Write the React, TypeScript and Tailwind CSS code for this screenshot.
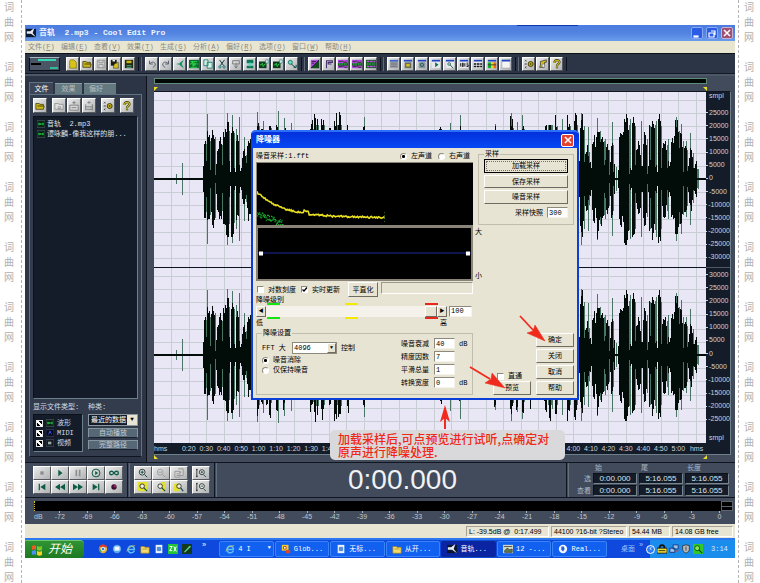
import React from "react";
import { clsx } from "clsx";

const CJK = "font-['Liberation_Sans','Noto_Sans_CJK_SC',sans-serif]";
const MONO = "font-['Liberation_Mono','Noto_Sans_CJK_SC',monospace]";

/* ---------- icons (12 x 12 grid) ---------- */

const icons: Record<string, React.ReactNode> = {
  page: <path d="M3 1h4l3 3v7H2V2z" fill="#d8c21c" stroke="#6b6000" strokeWidth=".7" />,
  folder: (
    <>
      <path d="M1 3h4l1 1h4v2h1l-1 4H1z" fill="#c9b41a" stroke="#2e2a00" strokeWidth=".8" />
      <path d="M3 6h7" stroke="#3b3500" />
    </>
  ),
  folderGrey: <path d="M1 3h4l1 1h5v6H1z M5 7h3v2H5z" fill="#ddd" stroke="#8a8a8a" strokeWidth=".9" />,
  saveGrey: <path d="M1.5 1.5h9v9h-9z M3.5 1.5v3h5v-3 M3.5 10.5v-4h5v4" fill="#d6d6d6" stroke="#8d8d8d" />,
  saveAs: (
    <>
      <path d="M1 1h7v7H1z" fill="#1d1d10" />
      <path d="M3 1h3v2H3z" fill="#eee" />
      <path d="M5 6l5-2v7H4z" fill="#d8c21c" stroke="#222" strokeWidth=".6" />
    </>
  ),
  saveAll: (
    <>
      <path d="M1 1h10v10H1z" fill="#252a10" />
      <path d="M3 2h6v3H3z" fill="#c9b41a" />
      <path d="M3 8h6M3 10h6" stroke="#4b9" />
    </>
  ),
  undo: <path d="M3 2v4h4M3 6c2-3 6-3 7 0 0 2-1 3-3 4" fill="none" stroke="#5c6470" strokeWidth="1.2" />,
  redo: <path d="M9 2v4H5M9 6c-2-3-6-3-7 0 0 2 1 3 3 4" fill="none" stroke="#5c6470" strokeWidth="1.2" />,
  leaf: (
    <>
      <path d="M1 6l5-1 4-3-2 4 2 4-4-3z" fill="#128a62" />
      <path d="M6 5l4-3M6 7l4 3" stroke="#128a62" strokeWidth="1.2" />
    </>
  ),
  wave: (
    <>
      <path d="M0 1h12v10H0z" fill="#0c6a2c" />
      <path d="M1 6h2l1-3 1 6 1-5 1 4 1-3 1 1h2M2 3h8M2 10h8" fill="none" stroke="#2fe84a" strokeWidth=".9" />
    </>
  ),
  copy: <path d="M1 1h5v7H1z M5 4h6v7H5z" fill="#d6efe6" stroke="#1b7c6c" />,
  cut: (
    <>
      <path d="M3 1l5 7M9 1L4 8" stroke="#1a3c3c" strokeWidth="1.2" />
      <circle cx="3.5" cy="9.5" r="1.4" fill="none" stroke="#177" />
      <circle cx="8.5" cy="9.5" r="1.4" fill="none" stroke="#177" />
    </>
  ),
  paste: <path d="M2 2h8v4H2z M6 5v5M4 8l2 3 2-3" fill="none" stroke="#777" strokeWidth="1.1" />,
  mix: (
    <>
      <path d="M2 1h8v4H2zM2 8h8v3H2z" fill="#0c7a58" />
      <path d="M6 4v5M3 6h6" stroke="#3cd6c4" strokeWidth="1.3" />
    </>
  ),
  clip: (
    <>
      <path d="M0 3h9v8H0z" fill="#0b3a1c" />
      <path d="M1 7h2l1-2 1 4 2-3h1" fill="none" stroke="#2fd84a" />
      <path d="M8 1h3v4H8z" fill="#e4f3ec" stroke="#177" strokeWidth=".7" />
    </>
  ),
  convert: (
    <>
      <circle cx="4" cy="4" r="2.4" fill="#6ee0c8" stroke="#0b6a58" />
      <path d="M5 6l5 4M8 10h3V7" fill="none" stroke="#0b4a48" strokeWidth="1.2" />
    </>
  ),
  purpleDiag: (
    <>
      <path d="M1 1h10v10H1z" fill="#b04be0" />
      <path d="M1 11L11 1v10z" fill="#154a20" />
      <path d="M2 3h5M2 5h3M1 11L11 1" stroke="#1c1030" strokeWidth=".9" />
    </>
  ),
  flag: <path d="M3 11V2h7v2H5v2h4" fill="none" stroke="#47306e" strokeWidth="1.3" />,
  purpleGreen: (
    <>
      <path d="M0 1h12v10H0z" fill="#b040e0" />
      <path d="M0 5h12v3H0z" fill="#145c22" />
      <path d="M1 3h3l1-1 2 2h4M1 9h4l1-1 2 2h3" fill="none" stroke="#1c3b12" />
      <path d="M1 6h10" stroke="#35d850" strokeDasharray="2 1" />
    </>
  ),
  greenPurple: (
    <>
      <path d="M0 1h12v10H0z" fill="#155c22" />
      <path d="M1 3h10M1 9h10" stroke="#c04be8" strokeWidth="2" strokeDasharray="3 1" />
      <path d="M1 6h10" stroke="#35d850" strokeDasharray="2 1" />
    </>
  ),
  win: (
    <>
      <path d="M1 1h10v10H1z" fill="#f4f4f4" stroke="#8d9299" strokeWidth=".7" />
      <path d="M1 1h10v2H1z" fill="#1f45c4" />
    </>
  ),
  winGrey: (
    <>
      <path d="M1 2h10v9H1z" fill="#9da1a8" />
      <path d="M1 1h10v2H1z" fill="#3f66d4" />
      <path d="M2 5h8M2 7h8M2 9h8" stroke="#6d727a" />
    </>
  ),
  winFolder: (
    <>
      <path d="M1 1h10v2H1z" fill="#1f45c4" />
      <path d="M2 4h8v7H2z" fill="#68705c" />
      <path d="M4 6h4v3H4z" fill="#d8c21c" />
    </>
  ),
  winSearch: (
    <>
      <path d="M1 1h10v2H1z" fill="#1f45c4" />
      <path d="M2 4h8v7H2z" fill="#89939a" />
      <circle cx="6" cy="7" r="2" fill="none" stroke="#175c50" />
    </>
  ),
  winPlay: (
    <>
      <path d="M1 1h10v10H1z" fill="#e6e8ec" />
      <path d="M1 1h10v2H1z" fill="#1f45c4" />
      <path d="M5 4l4 3-4 3z" fill="#0b6a44" />
    </>
  ),
  winZoom: (
    <>
      <path d="M1 1h10v10H1z" fill="#e6e8ec" />
      <path d="M1 1h10v2H1z" fill="#1f45c4" />
      <circle cx="5" cy="6" r="1.6" fill="none" stroke="#26604c" />
      <path d="M6 7l4 4" stroke="#26604c" strokeWidth="1.2" />
    </>
  ),
  winTime: (
    <>
      <path d="M1 1h10v10H1z" fill="#e6e8ec" />
      <path d="M1 1h10v2H1z" fill="#1f45c4" />
      <path d="M2 5v4M4 5h1v4H4zM7 5v4M9 5h2M9 7h2v2H9" fill="none" stroke="#111" strokeWidth="1.1" />
    </>
  ),
  winGrid: (
    <>
      <path d="M1 1h10v10H1z" fill="#e6e8ec" />
      <path d="M1 1h10v2H1z" fill="#1f45c4" />
      <path d="M1 6h10M1 9h10" stroke="#111" strokeWidth="2" strokeDasharray="3 .8" />
    </>
  ),
  winMeter: (
    <>
      <path d="M1 1h10v2H1z" fill="#1f45c4" />
      <path d="M1 4h4v7H1z" fill="#18a83a" />
      <path d="M5 4h3v7H5z" fill="#e8d820" />
      <path d="M8 4h3v7H8z" fill="#e86a20" />
      <path d="M1 7h10" stroke="#333" />
    </>
  ),
  options: (
    <>
      <path d="M1 1l2 2M3 1L1 3M1 5l2 2M3 5L1 7M1 9l2 2M3 9l-2 2" stroke="#333" strokeWidth=".8" />
      <circle cx="8" cy="6" r="3" fill="#c9b41a" stroke="#2a2800" />
      <circle cx="8" cy="6" r="1" fill="#2a2800" />
    </>
  ),
  script: (
    <>
      <path d="M3 3l7-2v3H8l-1 6H2l1-3z" fill="#d8c21c" stroke="#222" strokeWidth=".8" />
      <path d="M5 6h3v4H5z" fill="#eee" stroke="#333" strokeWidth=".5" />
    </>
  ),
  help: (
    <>
      <path d="M3 4.5c0-4 6-4 6-.5 0 2-3 2-3 4M6 9v2" fill="none" stroke="#3c3808" strokeWidth="2.6" />
      <path d="M3 4.5c0-4 6-4 6-.5 0 2-3 2-3 4M6 9v2" fill="none" stroke="#d0c020" strokeWidth="1.3" />
    </>
  ),
  insert: <path d="M1 5h10v6H1z M6 0v4M4 2h4M3 8h6" fill="#dadada" stroke="#777" strokeWidth="1" />,
  insertWave: <path d="M2 4v7M10 4v7M2 7h8M2 10h8M6 0v3M4 2h4" fill="none" stroke="#777" strokeWidth="1" />,
  stop: <path d="M4 4h4v4H4z" fill="#8d8d8d" />,
  play: <path d="M4 2l5 4-5 4z" fill="#0d5c44" />,
  pause: <path d="M4 2v8M8 2v8" stroke="#8d8d8d" strokeWidth="2" />,
  playCircle: (
    <>
      <circle cx="6" cy="6" r="4.7" fill="none" stroke="#0d5c44" strokeWidth="1.2" />
      <path d="M5 3.5L8.5 6 5 8.5z" fill="#0d5c44" />
    </>
  ),
  loop: (
    <path d="M6 6C4 3 .8 3.5 .8 6S4 9 6 6s5.2-2.5 5.2 0S8 9 6 6z" fill="none" stroke="#0d5c44" strokeWidth="1.6" />
  ),
  toStart: <path d="M2 2h1.500v8H2z M10 2v8L4 6z" fill="#0d5c44" />,
  rew: <path d="M6 2v8L0 6zM12 2v8L6 6z" fill="#0d5c44" />,
  ffwd: <path d="M0 2l6 4-6 4zM6 2l6 4-6 4z" fill="#0d5c44" />,
  toEnd: <path d="M8.500 2H10v8H8.500z M2 2l6 4-6 4z" fill="#0d5c44" />,
  record: (
    <>
      <circle cx="6" cy="6" r="3.2" fill="#3c1030" />
      <circle cx="7" cy="5" r="1.4" fill="#a0206a" />
    </>
  ),
  zoomIn: (
    <>
      <circle cx="5" cy="5" r="3.5" fill="#dfe8e4" stroke="#222" />
      <path d="M5 3v4M3 5h4M8 8l3 3" stroke="#0d4c44" strokeWidth="1.2" />
    </>
  ),
  zoomOut: (
    <>
      <circle cx="5" cy="5" r="3.5" fill="none" stroke="#999" />
      <path d="M3 5h4M8 8l3 3" stroke="#999" strokeWidth="1.2" />
    </>
  ),
  zoomFull: (
    <path d="M1 4h6v7H1zM5 1h6v8H7M3 7h3M3 9h3M8 4v2" fill="#d4d4d4" stroke="#888" strokeWidth=".9" />
  ),
  zoomSel: (
    <>
      <path d="M0 0h11v11H0z" fill="#e4e030" />
      <circle cx="5" cy="5" r="2.7" fill="#f2f2e0" stroke="#222" />
      <path d="M7 7l4 4" stroke="#0d4c44" strokeWidth="1.4" />
    </>
  ),
  zoomLeft: (
    <>
      <path d="M6 0h5v11H6z" fill="#e4e030" />
      <circle cx="5" cy="5" r="2.7" fill="#f2f2e0" stroke="#222" />
      <path d="M7 7l4 4" stroke="#0d4c44" strokeWidth="1.4" />
    </>
  ),
  zoomRight: (
    <>
      <path d="M0 2h6v9H0z" fill="#e4e030" />
      <circle cx="6" cy="5" r="2.7" fill="#f2f2e0" stroke="#222" />
      <path d="M8 7l3 4" stroke="#0d4c44" strokeWidth="1.4" />
    </>
  ),
  vZoomIn: (
    <>
      <path d="M1 1v10M0 2h2M0 10h2" stroke="#222" />
      <circle cx="7" cy="5" r="3" fill="#e8ece8" stroke="#222" />
      <path d="M7 3.5v3M5.500 5h3M9 8l3 3" stroke="#0d4c44" />
    </>
  ),
  vZoomOut: (
    <>
      <path d="M1 1v10M0 2h2M0 10h2" stroke="#222" />
      <circle cx="7" cy="5" r="3" fill="#e8ece8" stroke="#222" />
      <path d="M5.500 5h3M9 8l3 3" stroke="#0d4c44" />
    </>
  ),
  track: (
    <>
      <path d="M0 1h12v10H0z" fill="#0a1c12" stroke="#5d7a6c" strokeWidth=".8" />
      <path d="M2 6h8M3 4v4M5 5v2M9 4v4" stroke="#21d84a" strokeWidth="1.3" />
    </>
  ),
  midi: (
    <>
      <path d="M0 1h12v10H0z" fill="#05081c" stroke="#4d5a7c" strokeWidth=".8" />
      <path d="M4 8l2-5 1 3 2 2" fill="none" stroke="#3a54f0" strokeWidth="1.4" />
    </>
  ),
  video: (
    <>
      <path d="M0 1h12v10H0z" fill="#14181e" stroke="#5d6a7c" strokeWidth=".8" />
      <path d="M3 4h5v4H3z" fill="#9aa" />
    </>
  ),
  app: (
    <>
      <path d="M0 1h12v10H0z" fill="#0b1630" />
      <path d="M10 0L5 4H1v3h5l6 4-4-5z" fill="#e8eef8" />
    </>
  ),
  chrome: (
    <>
      <circle cx="6" cy="6" r="5" fill="#e2b52a" />
      <path d="M1.5 4A5 5 0 0 1 11 4H6z" fill="#d8382a" />
      <path d="M1.5 4l3 6A5 5 0 0 1 1.5 4z" fill="#2a9a44" />
      <circle cx="6" cy="6" r="2.2" fill="#3a7ce8" stroke="#fff" />
    </>
  ),
  globe: (
    <>
      <circle cx="6" cy="6" r="5" fill="#5aa8f4" />
      <path d="M3 3h6v5H3z" fill="#f2f6ff" />
    </>
  ),
  ie: (
    <>
      <path d="M10 8a4 4 0 1 1 0-3v1.500H3" fill="none" stroke="#5cc0fa" strokeWidth="1.8" />
      <path d="M1 9c2-5 6-7 10-7" fill="none" stroke="#f0c83c" strokeWidth=".8" />
    </>
  ),
  docFolder: <path d="M1 3h4l1 1h5v7H1z M3 6h6" fill="#f4dc6c" stroke="#a07c18" strokeWidth=".8" />,
  note: (
    <>
      <path d="M2 1h8v10H2z" fill="#e8f4ff" />
      <path d="M4 4h4v4H4z" fill="#4f90e0" stroke="#1c58b0" strokeWidth=".6" />
    </>
  ),
  green: (
    <>
      <path d="M0 0h12v12H0z" fill="#22c43a" />
      <path d="M2 3h3L2 8h3M7 3l3 6M10 3L7 9" fill="none" stroke="#fff" strokeWidth="1.2" />
    </>
  ),
  darkPen: (
    <>
      <path d="M0 0h12v12H0z" fill="#123a20" />
      <path d="M2 10l7-8 2 1-7 7z" fill="#5fd07c" />
    </>
  ),
  globalScape: (
    <>
      <path d="M1 1h8v7H1z" fill="#f0d028" />
      <path d="M3 3h3v3H3z" fill="#fff" stroke="#b33" />
      <path d="M6 7h5v4H6z" fill="#d84a28" />
    </>
  ),
  photo: (
    <>
      <path d="M0 1h12v10H0z" fill="#cfd8c4" />
      <path d="M1 3h10M2 8l3-3 3 2 3-1v4H2z" fill="#5b7a4c" stroke="#444" />
    </>
  ),
  real: (
    <>
      <circle cx="6" cy="6" r="5" fill="#f2f6ff" />
      <path d="M4 3h3l1 3-2 3-2-2z" fill="#2a5cd8" />
    </>
  ),
  lock: (
    <>
      <path d="M3 5c0-5 6-5 6 0" fill="none" stroke="#111" strokeWidth="2" />
      <path d="M0 5h12v6H0z" fill="#f4e030" stroke="#111" />
      <path d="M2 8h8" stroke="#111" />
    </>
  ),
  net: (
    <>
      <path d="M1 5h6v5H1zM5 1h6v5H5z" fill="#9ac4f4" stroke="#12306c" />
      <path d="M9 9l2-2" stroke="#e33" strokeWidth="1.5" />
    </>
  ),
  shield: <path d="M2 2l4-1 4 1v4c0 3-2 4-4 5-2-1-4-2-4-5z M6 3v5" fill="#b8bcc4" stroke="#333" />,
  scan: (
    <>
      <path d="M0 0h12v12H0z" fill="#2fc828" />
      <circle cx="5" cy="5" r="3" fill="#8ae45c" stroke="#0a4a0a" />
      <path d="M7 7l4 4" stroke="#0a4a0a" strokeWidth="1.5" />
    </>
  ),
};

function Icon({ name, className = "size-[10px]" }: { name: string; className?: string }) {
  return (
    <svg viewBox="0 0 12 12" className={clsx("block shrink-0", className)} aria-hidden="true">
      {icons[name]}
    </svg>
  );
}

const raised =
  "border border-t-white border-l-white border-r-[#55585c] border-b-[#55585c] bg-gradient-to-br from-[#ececec] to-[#b0b2b4]";

function ToolButton({ name, size = "w-[13px] h-[14px]" }: { name: string; size?: string }) {
  return (
    <button type="button" aria-label={name} className={clsx("flex shrink-0 items-center justify-center", raised, size)}>
      <Icon name={name} />
    </button>
  );
}

/* ---------- page margins ---------- */

function Margin({ side }: { side: "left" | "right" }) {
  return (
    <div
      className={clsx(
        "h-full w-[22px] shrink-0 overflow-hidden border-dashed border-[#b4b4b4] text-center text-[10px] leading-[15px] text-[#b0b0b0]",
        CJK,
        side === "left" ? "mr-[3px] border-r pr-[3px]" : "ml-[3px] border-l pr-[1px]",
      )}
    >
      {Array.from({ length: 10 }, (_, i) => (
        <div key={i} className="h-[60px]">
          {["词", "曲", "网"].map((c) => (
            <div key={c}>{c}</div>
          ))}
        </div>
      ))}
    </div>
  );
}

/* ---------- toolbar ---------- */

const toolGroups = [
  ["undo", "redo", "leaf", "wave", "copy", "cut", "paste", "mix", "clip", "clip", "convert"],
  ["purpleDiag", "flag", "purpleGreen", "purpleGreen", "greenPurple"],
  ["winGrey", "winFolder", "winSearch", "winPlay", "winZoom", "winTime", "winGrid", "winMeter", "win"],
  ["options", "script", "help"],
];

function Toolbar() {
  return (
    <div className="flex h-[21px] items-center gap-[2px] border-t border-b border-t-[#0c1018] border-b-[#141a26] bg-[#2b3546] pl-[4px]">
      <div className="flex items-center gap-[1px] border-r border-[#0d121c] pr-[3px]">
        <button
          type="button"
          aria-label="level"
          className="mr-[5px] flex h-[14px] w-[31px] flex-col justify-center gap-[2px] border border-[#0b0f18] border-t-[#aab4c0] bg-[#4a5666] px-[1px]"
        >
          <span className="ml-[7px] h-[2px] w-[18px] bg-[#35d8b0]" />
          <span className="h-[2px] w-[10px] bg-black" />
          <span className="ml-auto h-[2px] w-[8px] bg-[#2cbc98]" />
        </button>
        {["page", "folder", "saveGrey", "saveAs", "saveAll"].map((n) => (
          <ToolButton key={n} name={n} />
        ))}
      </div>
      {toolGroups.map((g, i) => (
        <div key={i} className="flex gap-[1px] border-l border-r border-l-[#5c6878] border-r-[#0d121c] px-[3px]">
          {g.map((n, j) => (
            <ToolButton key={j} name={n} />
          ))}
        </div>
      ))}
    </div>
  );
}

/* ---------- file organizer ---------- */

function Organizer() {
  return (
    <aside className={clsx("flex w-[121px] shrink-0 flex-col bg-[#2b3546] px-[4px] pt-[6px] pb-[5px] text-[7px] text-[#d4dae2]", MONO)}>
      <div className="flex items-end gap-[2px] leading-[10px]">
        <button type="button" className="h-[12px] w-[24px] border-t border-l border-[#5f7482] bg-[#3c4656] text-center text-white">
          文件
        </button>
        <button type="button" className="h-[11px] w-[27px] border-t border-[#8aa0a6] bg-[#64787f] text-center text-[#b4c0c4]">
          效果
        </button>
        <button type="button" className="h-[11px] w-[32px] border-t border-[#8aa0a6] bg-[#64787f] pl-[5px] text-left text-[#b4c0c4]">
          偏好
        </button>
      </div>
      <div className="flex flex-1 flex-col border border-[#5f7482] border-b-[#10151f] bg-[#323c4c] px-[3px] pt-[3px] pb-[4px]">
        <div className="flex h-[15px] gap-[1px]">
          <ToolButton name="folder" size="w-[14px] h-[15px] mr-[4px]" />
          <ToolButton name="folderGrey" size="w-[14px] h-[15px]" />
          <ToolButton name="insert" size="w-[14px] h-[15px]" />
          <ToolButton name="insertWave" size="w-[14px] h-[15px] mr-[4px]" />
          <ToolButton name="options" size="w-[14px] h-[15px] mr-[4px]" />
          <ToolButton name="help" size="w-[14px] h-[15px]" />
        </div>
        <ul className="mt-[3px] h-[283px] overflow-hidden border border-t-[#0c1018] border-r-[#6b8088] border-b-[#6b8088] border-l-[#0c1018] bg-[#151c29] px-[3px] pt-[2px] leading-[10px] whitespace-nowrap text-[#dfe4ea]">
          <li className="flex items-center gap-[2px]">
            <Icon name="track" className="size-[8px]" />
            <span>音轨&nbsp;&nbsp;2.mp3</span>
          </li>
          <li className="flex items-center gap-[2px]">
            <Icon name="track" className="size-[8px]" />
            谭咏麟-像我这样的朋...
          </li>
        </ul>
        <div className="mt-[3px] flex gap-[5px]">
          <fieldset className="w-[50px]">
            <legend className="h-[10px] leading-[10px] whitespace-nowrap">显示文件类型:</legend>
            <div className="mt-[2px] flex h-[38px] flex-col justify-center border border-[#0c1018] border-r-[#6b8088] border-b-[#6b8088] bg-[#151c29] pl-[2px]">
              {[
                ["波形", "track"],
                ["MIDI", "midi"],
                ["视频", "video"],
              ].map(([t, ic]) => (
                <label key={t} className="flex h-[10px] items-center gap-[3px] leading-[10px]">
                  <input
                    type="checkbox"
                    defaultChecked
                    className="size-[7px] appearance-none border border-[#e8e8e8] bg-black checked:bg-[linear-gradient(45deg,transparent_35%,#fff_35%,#fff_65%,transparent_65%)]"
                  />
                  <Icon name={ic} className="size-[8px]" />
                  {t}
                </label>
              ))}
            </div>
          </fieldset>
          <div className="flex w-[50px] flex-col">
            <label htmlFor="kind" className="h-[10px] leading-[10px]">
              种类:
            </label>
            <div className="relative mt-[2px] mb-[2px]">
              <select
                id="kind"
                className="block h-[12px] w-full appearance-none overflow-hidden border border-[#8c98a0] bg-[#151c29] pl-[2px] leading-[10px] text-white"
              >
                <option>最近的数据</option>
              </select>
              <span className="pointer-events-none absolute top-[1px] right-[1px] h-[10px] w-[10px] bg-[#e7e4d3] text-center text-[6px] leading-[10px] text-black">
                ▼
              </span>
            </div>
            <button type="button" className="mb-[2px] h-[10px] border border-[#83949c] border-b-[#1a202c] bg-[#566876] leading-[8px] text-[#c4ccd4]">
              自动播放
            </button>
            <button type="button" className="h-[10px] border border-[#83949c] border-b-[#1a202c] bg-[#566876] leading-[8px] text-[#c4ccd4]">
              完整路径
            </button>
          </div>
        </div>
      </div>
    </aside>
  );
}

/* ---------- wave display ---------- */

/* loud passages: first column, last column, peak level */
const passages: number[][] = [
  [50, 51, 44], [53, 55, 48], [57, 60, 52], [63, 64, 34], [65, 67, 42], [69, 71, 50], [72, 74, 60], [77, 79, 58],
  [82, 84, 44], [88, 91, 30], [93, 97, 42], [103, 104, 66], [107, 108, 52], [112, 113, 52], [115, 116, 64],
  [122, 123, 60], [129, 131, 56], [156, 158, 62], [160, 161, 68], [163, 163, 68], [167, 169, 67], [175, 176, 56],
  [180, 182, 67], [184, 186, 68], [193, 194, 58], [209, 210, 54], [285, 287, 54], [305, 306, 56], [339, 342, 54],
  [356, 358, 64], [362, 363, 58], [368, 369, 62], [376, 377, 55], [390, 393, 67], [395, 396, 67], [401, 402, 66],
  [413, 415, 66], [420, 422, 67], [426, 429, 66], [431, 434, 34], [438, 441, 44], [442, 445, 60], [446, 449, 48],
  [452, 454, 36], [457, 458, 42], [465, 468, 56], [469, 474, 68], [478, 480, 66], [482, 486, 38], [489, 492, 50],
  [495, 495, 66], [497, 500, 68], [504, 506, 66], [508, 512, 42], [517, 519, 44], [520, 524, 60], [525, 528, 48],
  [530, 532, 36], [535, 538, 32], [540, 542, 12],
];

/* single thin peaks */
const peaks: number[][] = [
  [28, 16], [22, 5], [53, 65], [73, 66], [78, 64], [103, 67], [109, 58], [124, 68], [130, 61], [137, 56], [210, 62],
  [296, 56], [306, 64], [341, 55], [357, 66], [363, 57], [368, 64], [427, 66], [434, 52], [443, 61], [458, 57],
  [487, 58], [522, 62], [527, 55], [532, 38], [536, 46], [544, 10], [82, 50], [85, 62], [90, 42], [451, 40],
  [398, 54], [408, 60], [462, 12], [476, 60], [502, 58], [514, 40],
];

const noise = (n: number) => {
  const v = Math.sin(n * 127.1 + 31.7) * 43758.5453;
  return v - Math.floor(v);
};

function wavePaths(mid: number) {
  let body = "";
  let thin = "";
  const bar = (x: number, up: number, down: number) => `M${x + 0.5} ${mid - up}V${mid + down}`;
  for (let x = 0; x < 552; x++) {
    const quiet = x < 49 || x > 542 || (x > 460 && x < 464);
    const low = quiet ? 1 : 4 + noise(x) * 15;
    body += bar(x, low, low);
  }
  passages.forEach(([a, b, p]) => {
    for (let x = a; x <= b; x++) {
      const edge = b - a > 2 && (x === a || x === b) ? 0.8 : 1;
      body += bar(x, p * edge * (0.78 + 0.22 * noise(x * 3)), p * edge * (0.78 + 0.22 * noise(x * 7 + 5)));
    }
    thin += bar(b + 1, p * 0.8, p * 0.75);
  });
  peaks.forEach(([x, p]) => {
    thin += bar(x, p, p);
  });
  return { body, thin };
}

const channels = [
  { mid: 87, ...wavePaths(87) },
  { mid: 263, ...wavePaths(263) },
];

function WavePlot() {
  return (
    <svg viewBox="0 0 552 351" preserveAspectRatio="none" className="block h-[351px] w-full bg-[#e9e6f5]" role="img" aria-label="waveform" shapeRendering="crispEdges">
      <g stroke="#c8ced4" strokeWidth="1">
        {Array.from({ length: 31 }, (_, i) => (
          <path key={i} d={`M${Math.round((i + 1) * 17.47) + 0.5} 0V351`} />
        ))}
        {channels.map((c) =>
          Array.from({ length: 13 }, (_, i) => (
            <path key={`${c.mid}-${i}`} d={`M0 ${c.mid + Math.round((i - 6) * 13.2) + 0.5}H552`} />
          )),
        )}
      </g>
      {channels.map((c) => (
        <g key={c.mid}>
          <path d={c.thin} stroke="#4a7464" strokeWidth="1" />
          <path d={c.body} stroke="#020c08" strokeWidth="1" />
          <path d={`M0 ${c.mid}H552`} stroke="#020c08" strokeWidth="2" />
        </g>
      ))}
      <path d="M0 175.500H552" stroke="#0c1420" strokeWidth="1" />
    </svg>
  );
}

const levels = (from: number) => Array.from({ length: 12 }, (_, i) => String(from - i * 5000));

function LevelRuler() {
  const cells = (from: number) => (
    <div className="flex h-[158px] flex-col">
      {levels(from).map((v) => (
        <span key={v} className="flex flex-1 items-center before:mr-px before:h-px before:w-[2px] before:bg-[#cdd3da]">
          {v}
        </span>
      ))}
    </div>
  );
  return (
    <div className={clsx("flex w-[24px] shrink-0 flex-col bg-[#151c29] text-[7px] leading-[8px] text-[#cdd3da]", CJK)}>
      <div className="h-[14px] pl-[3px]">smpl</div>
      {cells(25000)}
      <div className="mt-[3px] h-px bg-[#4d5868]" />
      {cells(30000)}
      <div className="mt-[8px] pl-[3px]">smpl</div>
    </div>
  );
}

/* seconds between which the note bubble lies over the ruler */
const covered = [110, 230];

function TimeRuler() {
  const labels = Array.from({ length: 29 }, (_, i) => (i + 2) * 10);
  return (
    <div className={clsx("flex h-[11px] bg-[#151c29] text-[7px] leading-[11px] text-[#cdd3da]", CJK)}>
      <span className="w-[26px]">hms</span>
      {labels.map((s) => (
        <span key={s} className="flex-1 basis-0 overflow-visible text-center">
          {s >= covered[0] && s <= covered[1] ? "" : `${Math.floor(s / 60)}:${String(s % 60).padStart(2, "0")}`}
        </span>
      ))}
      <span className="w-[19px] text-center">hms</span>
    </div>
  );
}

function Corner({ className }: { className?: string }) {
  return (
    <svg viewBox="0 0 4 4" className={clsx("size-[4px]", className)} aria-hidden="true">
      <path d="M0 0h4L0 4z" fill="#ece020" />
    </svg>
  );
}

function WaveArea() {
  return (
    <section className="flex min-w-0 flex-1 flex-col border-l border-[#0d121c] bg-[#414b5c] pt-[2px] pr-[4px] pl-[7px]">
      <div className="mr-[24px] h-[6px] border border-[#5e8c78] bg-[#020806]" />
      <div className="mr-[24px] flex h-[7px] items-end justify-between">
        <Corner />
        <Corner className="-scale-x-100" />
      </div>
      <div className="flex border-t border-r border-b border-t-[#10151f] border-r-[#6b8088] border-b-[#6b8088]">
        <div className="flex min-w-0 flex-1 flex-col">
          <WavePlot />
          <TimeRuler />
        </div>
        <LevelRuler />
      </div>
      <div className="mr-[24px] flex justify-between">
        <Corner className="-scale-y-100" />
        <Corner className="-scale-100" />
      </div>
    </section>
  );
}

/* ---------- noise reduction dialog ---------- */

const xpButton =
  "border border-t-white border-l-white border-r-[#6f6b60] border-b-[#6f6b60] bg-[#e7e4d3] text-center text-black";
const xpInput = "h-[11px] border border-[#8d897c] border-r-[#f6f4ea] border-b-[#f6f4ea] bg-white pl-[1px] leading-[9px]";

function Radio({ name, label, on }: { name: string; label: string; on?: boolean }) {
  return (
    <label className="flex h-[10px] items-center gap-[4px]">
      <input
        type="radio"
        name={name}
        defaultChecked={on}
        className="size-[7px] appearance-none rounded-full border border-[#8d897c] border-r-white border-b-white bg-white checked:bg-[radial-gradient(circle,#000_38%,#fff_45%)]"
      />
      {label}
    </label>
  );
}

function Check({ label, on }: { label: string; on?: boolean }) {
  return (
    <label className="flex items-center gap-[4px]">
      <span className="grid">
        <input
          type="checkbox"
          defaultChecked={on}
          className="col-start-1 row-start-1 size-[7px] appearance-none border border-[#8d897c] border-r-white border-b-white bg-white"
        />
        {on && (
          <svg viewBox="0 0 7 7" className="pointer-events-none col-start-1 row-start-1 size-[7px]" aria-hidden="true">
            <path d="M1.500 3.500L3 5l3-3.500" fill="none" stroke="#000" strokeWidth="1.3" />
          </svg>
        )}
      </span>
      {label}
    </label>
  );
}

const yellowCurve = Array.from({ length: 128 }, (_, x) => {
  const base = 55.5 - 26 * Math.exp(-x / 26);
  const bump = x > 46 && x < 52 ? -2.5 : 0;
  return `${x},${(base + bump + (noise(x) - 0.5) * 2).toFixed(1)}`;
}).join(" ");

const greenDots = Array.from({ length: 60 }, (_, i) => {
  const x = i / 2.3;
  return `M${x.toFixed(1)} ${(52 + x * 0.4 + (noise(i + 9) - 0.5) * 7).toFixed(1)}h1.2`;
}).join("");

function Marks() {
  return (
    <div className="flex h-[2px] items-center pl-[11px]">
      <span className="h-[2px] w-[13px] bg-[#14e614]" />
      <span className="ml-[65px] h-[2px] w-[13px] bg-[#f2ea00]" />
      <span className="ml-[67px] h-[2px] w-[13px] bg-[#e8261c]" />
    </div>
  );
}

function NoiseDialog() {
  return (
    <div
      role="dialog"
      aria-label="降噪器"
      className={clsx(
        "absolute top-[105px] left-[226px] flex h-[270px] w-[328px] flex-col rounded-t-[5px] border-2 border-t-0 border-[#0b3fd8] bg-[#e7e4d3] text-[7px] leading-[10px] whitespace-nowrap text-black",
        MONO,
      )}
    >
      <header className="-mx-[2px] flex h-[18px] items-center justify-between rounded-t-[5px] border-t-2 border-[#2a70f8] bg-gradient-to-b from-[#0430dc] to-[#0748f4] px-[5px] text-[8px] font-bold text-white">
        降噪器
        <button
          type="button"
          aria-label="关闭窗口"
          className="grid size-[13px] place-items-center rounded-[2px] border border-white bg-[#e2432e]"
        >
          <svg viewBox="0 0 8 8" className="size-[8px]" aria-hidden="true">
            <path d="M1 1l6 6M7 1L1 7" stroke="#fff" strokeWidth="1.5" />
          </svg>
        </button>
      </header>
      <div className="flex flex-1 gap-[2px] pt-[2px] pl-[3px]">
        <div className="flex w-[217px] shrink-0 flex-col">
          <div className="flex h-[12px] items-center">
            <span className="w-[144px]">噪音采样:1.fft</span>
            <Radio name="ch" label="左声道" on />
            <span className="w-[6px]" />
            <Radio name="ch" label="右声道" />
          </div>
          <svg viewBox="0 0 215 63" preserveAspectRatio="none" className="block h-[63px] w-full border-t border-l border-[#8a8478] bg-black" role="img" aria-label="noise profile">
            <polyline points={yellowCurve} fill="none" stroke="#e8e020" strokeWidth="1.6" />
            <path d={greenDots} stroke="#18a82c" strokeWidth="1.2" />
            <path d="M127 50v12" stroke="#3c7820" strokeDasharray="1 2" />
          </svg>
          <svg viewBox="0 0 211 52" preserveAspectRatio="none" className="block h-[56px] w-full border-2 border-t-[3px] border-[#8a8478] bg-black" role="img" aria-label="reduction graph">
            <path d="M0 25.500H211" stroke="#1c2c9c" />
            <path d="M1 24h4v4H1zM206 24h4v4h-4z" fill="#fff" />
          </svg>
          <div className="mt-[1px] flex h-[15px] items-center">
            <span className="w-[45px] pl-[1px]">
              <Check label="对数刻度" />
            </span>
            <Check label="实时更新" on />
            <button type="button" className={clsx("ml-[8px] h-[15px] w-[30px]", xpButton)}>
              平直化
            </button>
            <span className="ml-[3px] h-[12px] flex-1 self-start border border-[#9b978a] border-r-white border-b-white" />
          </div>
          <label htmlFor="level" className="h-[6px] leading-[6px]">
            降噪级别
          </label>
          <div className="flex items-center gap-[2px]">
            <div className="flex w-[191px] flex-col">
              <Marks />
              <div className="flex h-[12px] items-center">
                <button type="button" aria-label="降低" className={clsx("h-[11px] w-[10px] text-[5px] leading-[9px]", xpButton)}>
                  ◀
                </button>
                <input
                  id="level"
                  type="range"
                  defaultValue={100}
                  className="h-[11px] min-w-0 flex-1 appearance-none bg-[#f4f2ea] [&::-webkit-slider-thumb]:h-[11px] [&::-webkit-slider-thumb]:w-[12px] [&::-webkit-slider-thumb]:appearance-none [&::-webkit-slider-thumb]:border [&::-webkit-slider-thumb]:border-white [&::-webkit-slider-thumb]:border-r-[#6f6b60] [&::-webkit-slider-thumb]:border-b-[#6f6b60] [&::-webkit-slider-thumb]:bg-[#e7e4d3]"
                />
                <button type="button" aria-label="提高" className={clsx("h-[11px] w-[10px] text-[5px] leading-[9px]", xpButton)}>
                  ▶
                </button>
              </div>
              <Marks />
            </div>
            <input aria-label="级别" defaultValue="100" className={clsx("w-[23px]", xpInput)} />
          </div>
          <div className="flex h-[8px] justify-between pr-[26px] leading-[8px]">
            <span>低</span>
            <span>高</span>
          </div>
          <fieldset className="mt-[2px] flex h-[66px] flex-col border border-[#c0bcae] pr-[3px] pl-[5px]">
            <legend className="px-[1px] leading-[8px]">降噪设置</legend>
            <div className="flex justify-between">
              <div className="flex flex-col pt-[5px]">
                <div className="mb-[1px] flex items-center">
                  <label htmlFor="fft" className="w-[30px]">
                    FFT 大
                  </label>
                  <div className="relative mr-[4px] w-[45px]">
                    <select
                      id="fft"
                      className="block h-[12px] w-full appearance-none border border-[#8d897c] bg-white pl-[1px] leading-[10px]"
                    >
                      <option>4096</option>
                    </select>
                    <span className={clsx("pointer-events-none absolute top-[1px] right-[1px] h-[10px] w-[9px] text-[5px] leading-[9px]", xpButton)}>
                      ▼
                    </span>
                  </div>
                  控制
                </div>
                <Radio name="mode" label="噪音消除" on />
                <Radio name="mode" label="仅保持噪音" />
              </div>
              <div className="flex flex-col gap-[2px] pt-px">
                {[
                  ["噪音衰减", "40", "dB"],
                  ["精度因数", "7", ""],
                  ["平滑总量", "1", ""],
                  ["转换宽度", "0", "dB"],
                ].map(([l, v, u]) => (
                  <div key={l} className="flex h-[11px] items-center">
                    <label htmlFor={l} className="w-[33px]">
                      {l}
                    </label>
                    <input id={l} defaultValue={v} className={clsx("w-[21px]", xpInput)} />
                    <span className="w-[14px] pl-[4px]">{u}</span>
                  </div>
                ))}
              </div>
            </div>
          </fieldset>
        </div>
        <div className="flex min-w-0 flex-1 flex-col pr-[3px]">
          <fieldset className="ml-[3px] flex h-[75px] flex-col border border-[#c0bcae] px-[5px]">
            <legend className="px-[1px] leading-[9px]">采样</legend>
            <button type="button" className="h-[14px] border border-black bg-[#e7e4d3] p-px">
              <span className="block border border-dotted border-[#77736a] leading-[8px]">加载采样</span>
            </button>
            <button type="button" className={clsx("mt-[2px] h-[13px]", xpButton)}>
              保存采样
            </button>
            <button type="button" className={clsx("mt-[2px] h-[14px]", xpButton)}>
              噪音采样
            </button>
            <div className="mt-[3px] flex items-center justify-end gap-[4px]">
              <label htmlFor="snap">采样快照</label>
              <input id="snap" defaultValue="300" className={clsx("w-[21px]", xpInput)} />
            </div>
          </fieldset>
          <span className="mt-[2px]">大</span>
          <span className="mt-[34px]">小</span>
          <div className="mt-auto mb-[3px] flex items-end justify-end gap-[5px]">
            <div className="flex w-[38px] flex-col">
              <div className="pl-[4px]">
                <Check label="直通" />
              </div>
              <button type="button" className={clsx("h-[14px]", xpButton)}>
                预览
              </button>
            </div>
            <div className="flex w-[38px] flex-col gap-[2px]">
              {["确定", "关闭", "取消", "帮助"].map((t) => (
                <button key={t} type="button" className={clsx("h-[14px]", xpButton)}>
                  {t}
                </button>
              ))}
            </div>
          </div>
        </div>
      </div>
    </div>
  );
}

/* ---------- annotations ---------- */

function Arrows() {
  return (
    <svg viewBox="0 0 110 120" className="pointer-events-none absolute top-[285px] left-[415px] h-[120px] w-[110px]" aria-hidden="true">
      <g fill="#f02a1c" stroke="#f02a1c">
        <path d="M80 6l14 15" strokeWidth="1.8" fill="none" />
        <path d="M105 31l-18-8 6-2 2-6z" strokeWidth=".5" />
        <path d="M30 57l20 12" strokeWidth="1.8" fill="none" />
        <path d="M65 78l-20-5 6-4 1-6z" strokeWidth=".5" />
        <path d="M5 119V105" strokeWidth="2" fill="none" />
      </g>
      <path d="M5 95l5 17-5-4-5 4z" fill="#f02a1c" />
    </svg>
  );
}

function Callout() {
  return (
    <p className="absolute top-[405px] left-[305px] w-[235px] rounded-[5px] bg-[#d9d9dc] px-[8px] py-[2px] font-['Noto_Sans_CJK_SC',sans-serif] text-[12px] leading-[13px] font-medium whitespace-nowrap text-[#f02818]">
      加载采样后,可点预览进行试听,点确定对
      <br />
      原声进行降噪处理.
    </p>
  );
}

/* ---------- transport ---------- */

function Grip() {
  return <div className="mx-[4px] w-[3px] self-stretch border-r border-l border-r-[#5f7080] border-l-[#10151f]" />;
}

function Transport() {
  const rows = [
    ["选", "0:00.000", "5:16.055", "5:16.055"],
    ["查看", "0:00.000", "5:16.055", "5:16.055"],
  ];
  return (
    <div className="flex h-[36px] items-center border-t border-b border-t-[#10151f] border-b-[#10151f] bg-[#414b5c] pl-[8px]">
      <div className="grid grid-cols-5">
        {["stop", "play", "pause", "playCircle", "loop", "toStart", "rew", "ffwd", "toEnd", "record"].map((n) => (
          <ToolButton key={n} name={n} size="w-[18px] h-[14px]" />
        ))}
      </div>
      <Grip />
      <div className="grid grid-cols-3">
        {["zoomIn", "zoomOut", "zoomFull", "zoomSel", "zoomLeft", "zoomRight"].map((n) => (
          <ToolButton key={n} name={n} size="w-[18px] h-[14px]" />
        ))}
      </div>
      <div className="ml-[4px] grid">
        {["vZoomIn", "vZoomOut"].map((n) => (
          <ToolButton key={n} name={n} size="w-[18px] h-[14px]" />
        ))}
      </div>
      <Grip />
      <output className={clsx("flex-1 pl-[22px] text-center text-[28px] leading-[34px] text-[#f0f2f4]", CJK)}>0:00.000</output>
      <Grip />
      <table className={clsx("mr-[4px] w-[158px] table-fixed border-separate border-spacing-x-[2px] border-spacing-y-[1px] text-[7px] leading-[9px] text-[#dde2e8]", CJK)}>
        <thead>
          <tr className="text-[#aeb8c2]">
            <th className="w-[16px]" aria-label="范围" />
            {["始", "尾", "长度"].map((h) => (
              <th key={h} className="pl-[2px] text-left leading-[8px] font-normal">
                {h}
              </th>
            ))}
          </tr>
        </thead>
        <tbody>
          {rows.map(([h, ...v]) => (
            <tr key={h}>
              <th className="text-right font-normal whitespace-nowrap text-[#aeb8c2]">{h}</th>
              {v.map((t, i) => (
                <td key={i} className="border border-[#0c1018] border-r-[#76848e] border-b-[#76848e] bg-[#151c29] text-center text-[8px]">
                  {t}
                </td>
              ))}
            </tr>
          ))}
        </tbody>
      </table>
    </div>
  );
}

function Meter() {
  return (
    <div className={clsx("bg-[#414b5c] pt-[3px] pr-[2px] pl-[9px] text-[7px] text-[#c0c8d0]", CJK)}>
      <div className="flex h-[10px] justify-end border-l border-dotted border-[#d8c020] bg-black">
        <div className="flex w-[12px] items-center border border-[#5c6470]">
          <span className="h-px w-full bg-[#5c6470]" />
        </div>
      </div>
      <div className="flex h-[13px] leading-[8px]">
        <span className="w-[12px] pt-[2px]">dB</span>
        {Array.from({ length: 25 }, (_, i) => (
          <span key={i} className="flex flex-1 basis-0 flex-col items-center">
            <i className="h-[2px] w-px bg-[#aeb8c2]" />
            {i === 24 ? "0" : String(-72 + i * 3)}
          </span>
        ))}
      </div>
    </div>
  );
}

function StatusBar() {
  const cell = "h-[11px] border border-[#a8a494] border-r-white border-b-white pl-[2px] leading-[10px]";
  return (
    <div className={clsx("flex h-[14px] items-center justify-end gap-[2px] bg-[#e8e5d3] pr-[2px] text-[7px] whitespace-pre text-black", CJK)}>
      <span className={clsx("w-[83px]", cell)}>L: -39.5dB @  0:17.499</span>
      <span className={clsx("w-[76px]", cell)}>44100 ?16-bit ?Stereo</span>
      <span className={clsx("w-[41px]", cell)}>54.44 MB</span>
      <span className={clsx("w-[61px]", cell)}>14.08 GB free</span>
    </div>
  );
}

/* ---------- taskbar ---------- */

function Taskbar() {
  const tasks = [
    ["ie", "4 I"],
    ["globalScape", "Glob..."],
    ["note", "无标..."],
    ["docFolder", "从开..."],
    ["app", "音轨..."],
    ["photo", "12 -..."],
    ["real", "Real..."],
  ];
  return (
    <nav className={clsx("flex h-[20px] items-stretch border-t-2 border-[#2c78f0] bg-[#0f48dc] text-[7px] text-white", MONO)}>
      <button
        type="button"
        className="flex w-[59px] items-center gap-[5px] rounded-r-[4px] border-t border-[#6cc46c] bg-gradient-to-b from-[#2f9432] to-[#1c7a22] pl-[6px] text-[12px] leading-[14px] italic"
      >
        <svg viewBox="0 0 12 12" className="size-[12px]" aria-hidden="true">
          <path d="M1 2c2-1 3-1 4 0v4c-1-1-3-1-4 0z" fill="#f05a28" />
          <path d="M6 2c2 1 3 1 5 0v4c-2 1-3 1-5 0z" fill="#7cc82c" />
          <path d="M1 7c2-1 3-1 4 0v4c-1-1-3-1-4 0z" fill="#4c90f8" />
          <path d="M6 7c2 1 3 1 5 0v4c-2 1-3 1-5 0z" fill="#f8d024" />
        </svg>
        开始
      </button>
      <div className="flex items-center gap-[4px] pl-[14px]">
        {["chrome", "globe", "ie", "docFolder", "note", "green", "darkPen"].map((n) => (
          <Icon key={n} name={n} />
        ))}
        <span className="ml-[6px] self-start">»</span>
      </div>
      <div className="ml-[13px] flex min-w-0 flex-1 items-stretch gap-[1px] py-[1px]">
        {tasks.map(([ic, t], i) => (
          <button
            key={t}
            type="button"
            className={clsx(
              "flex min-w-0 flex-1 items-center gap-[3px] rounded-[2px] border pl-[5px] whitespace-nowrap",
              i === 4 ? "border-[#0a2a90] bg-[#0a24a4]" : "border-[#3a84fa] bg-[#1260f0]",
            )}
          >
            <Icon name={ic} />
            {t}
            {i === 0 && <span className="ml-auto pr-[2px] text-[5px]">▼</span>}
          </button>
        ))}
      </div>
      <div className="flex w-[42px] shrink-0 items-center gap-[4px] pl-[14px] text-[#9cc0ff]">
        桌面 <span className="self-start">»</span>
      </div>
      <div className="flex w-[86px] shrink-0 items-center gap-[2px] border-l border-[#0c4cb4] bg-[#1a8cec] pl-[3px]">
        <button type="button" aria-label="展开" className="-ml-[7px] grid size-[9px] place-items-center rounded-full border border-white bg-[#2f7cf0] leading-[7px]">
          ‹
        </button>
        {["lock", "net", "shield", "scan"].map((n) => (
          <Icon key={n} name={n} />
        ))}
        <time className="ml-[6px] text-[#d8ecff]">3:14</time>
      </div>
    </nav>
  );
}

/* ---------- window ---------- */

export default function App() {
  const menus = ["文件(F)", "编辑(E)", "查看(V)", "效果(T)", "生成(G)", "分析(A)", "偏好(R)", "选项(O)", "窗口(W)", "帮助(H)"];
  return (
    <div className="flex h-screen overflow-hidden bg-white">
      <Margin side="left" />
      <main className="relative mt-[25px] flex min-w-0 flex-1 flex-col self-start">
        <header className={clsx("flex h-[16px] items-center gap-[3px] bg-gradient-to-b from-[#4b7ce0] via-[#5283e0] to-[#6a9cec] pr-[2px] pl-[1px] text-[8px] font-bold text-[#f0f4ff]", MONO)}>
          <Icon name="app" />
          <h1 className="flex-1 whitespace-pre">音轨  2.mp3 - Cool Edit Pro</h1>
          {["M2 8h4v1H2z", "M2 5h5v4H2zM4 3h4v4"].map((d, i) => (
            <button key={i} type="button" aria-label={i ? "还原" : "最小化"} className="grid size-[12px] place-items-center rounded-[2px] border border-[#88a8f4] bg-[#2a5ce4]">
              <svg viewBox="0 0 10 10" className="size-[10px]" aria-hidden="true">
                <path d={d} fill="none" stroke="#fff" strokeWidth="1.2" />
              </svg>
            </button>
          ))}
          <button type="button" aria-label="关闭" className="grid size-[12px] place-items-center rounded-[2px] border border-[#c8b0d0] bg-[#a05070]">
            <svg viewBox="0 0 10 10" className="size-[10px]" aria-hidden="true">
              <path d="M2 2l6 6M8 2L2 8" stroke="#fff" strokeWidth="1.5" />
            </svg>
          </button>
        </header>
        <span className="absolute top-0 left-[492px] h-px w-[61px] bg-[#1038b0]" />
        <nav className={clsx("flex h-[12px] items-center bg-[#e8e5d1] pl-[3px] text-[7px] text-[#8c897e]", MONO)}>
          {menus.map((m) => (
            <button key={m} type="button" className="w-[33px] shrink-0 text-left whitespace-nowrap">
              {m.slice(0, 3)}
              <u>{m[3]}</u>)
            </button>
          ))}
        </nav>
        <Toolbar />
        <div className="flex h-[388px] border-t-2 border-[#4c5868]">
          <Organizer />
          <WaveArea />
        </div>
        <Transport />
        <Meter />
        <StatusBar />
        <Taskbar />
        <NoiseDialog />
        <Arrows />
        <Callout />
      </main>
      <Margin side="right" />
    </div>
  );
}
